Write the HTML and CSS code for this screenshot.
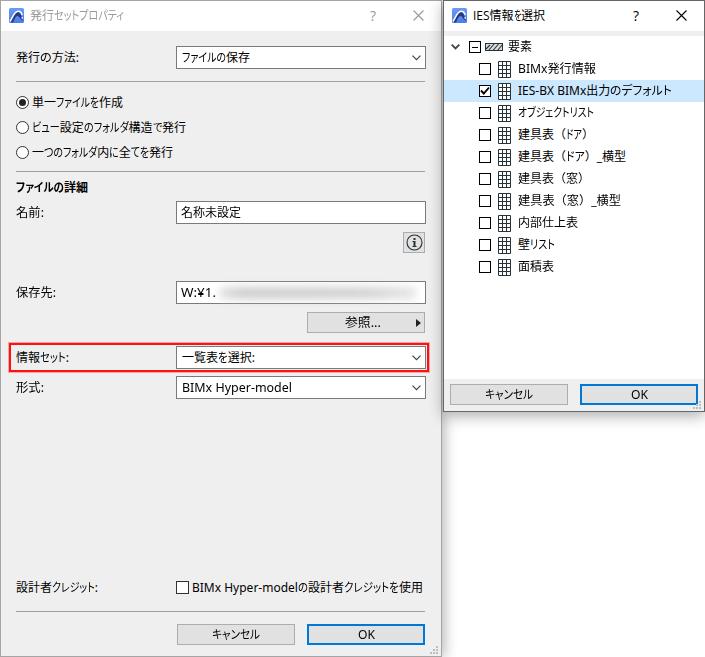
FILE: index.html
```html
<!DOCTYPE html>
<html lang="ja">
<head>
<meta charset="utf-8">
<title>発行セットプロパティ</title>
<link rel="stylesheet" href="styles.css">
</head>
<body>
<svg width="0" height="0" class="defs" aria-hidden="true">
  <defs>
    <linearGradient id="blue" x1="0" y1="0" x2="0" y2="1"><stop offset="0" stop-color="#6b9af8"/><stop offset="1" stop-color="#4c7cec"/></linearGradient>
    <symbol id="logo" viewBox="0 0 15 15"><rect width="15" height="15" rx="1.500" fill="url(#blue)"/><path d="M1 14C4 8.500 6 4 9 4 11.500 4 12.500 8 14 13L11.500 11C10 8.500 9 7.500 7.500 8.500 6 9.500 5 12 4 14.500Z" fill="#263c7c"/><path d="M1 13.500C4 8.500 5.500 3.500 9 3.300 11 3.200 12.500 4.500 13.300 7" fill="none" stroke="#fff" stroke-width="1.500"/><path d="M13.200 9v1.800" stroke="#fff" stroke-width="1.300"/></symbol>
    <symbol id="chev" viewBox="0 0 9 6"><path d="M.5 .7 4.500 4.700 8.500 .7" fill="none" stroke="#444" stroke-width="1.200"/></symbol>
    <symbol id="close" viewBox="0 0 11 11"><path d="M.5.5l10 10M10.500.5l-10 10" fill="none" stroke="currentColor" stroke-width="1.100"/></symbol>
    <symbol id="grid" viewBox="0 0 13 17"><rect width="13" height="17" rx="1" fill="#263238"/><path fill="#fff" d="M1 1h3v3H1zM5 1h3v3H5zM9 1h3v3H9zM1 5h3v3H1zM5 5h3v3H5zM9 5h3v3H9zM1 9h3v3H1zM5 9h3v3H5zM9 9h3v3H9zM1 13h3v3H1zM5 13h3v3H5zM9 13h3v3H9z"/></symbol>
    <symbol id="grip" viewBox="0 0 8 8"><path fill="#bdbdbd" d="M6 0h2v2H6zM3 3h2v2H3zM6 3h2v2H6zM0 6h2v2H0zM3 6h2v2H3zM6 6h2v2H6z"/></symbol>
  </defs>
</svg>

<main class="desk">
  <section class="win main">
    <header class="titlebar">
      <svg class="logo"><use href="#logo"/></svg>
      <span class="t title" data-w="94">発行<b>セットプロパティ</b></span>
      <span class="help">?</span>
      <svg class="close"><use href="#close"/></svg>
    </header>
    <div class="body">
      <div class="row r-method"><label><span class="t" data-w="63">発行<b>の</b>方法:</span></label><div class="field select"><span class="t" data-w="68"><b>ファイルの</b>保存</span><svg class="chev"><use href="#chev"/></svg></div></div>
      <hr>
      <div class="radios">
        <div class="radio"><i class="dot on"></i><span class="t" data-w="91">単一<b>ファイルを</b>作成</span></div>
        <div class="radio"><i class="dot"></i><span class="t" data-w="154"><b>ビュー</b>設定<b>のフォルダ</b>構造<b>で</b>発行</span></div>
        <div class="radio"><i class="dot"></i><span class="t" data-w="141">一<b>つのフォルダ</b>内<b>に</b>全<b>てを</b>発行</span></div>
      </div>
      <hr>
      <h2><span class="t" data-w="72"><b>ファイルの</b>詳細</span></h2>
      <div class="row r-name"><label><span class="t" data-w="28">名前:</span></label><div class="field input"><span class="t" data-w="60">名称未設定</span></div></div>
      <div class="info"><button aria-label="情報"><svg width="17" height="17" viewBox="0 0 17 17"><circle cx="8.500" cy="8.500" r="7.500" fill="none" stroke="#263238" stroke-width="1.100"/><path d="M7.500 4h2v2h-2zM6.500 7h3v5h1v1h-4v-1h1V8h-1z" fill="#263238"/></svg></button></div>
      <div class="row r-dest"><label><span class="t" data-w="40">保存先:</span></label><div class="field input"><span class="t" data-w="35">W:¥1.</span><span class="smudge"></span></div></div>
      <div class="browse"><button><span class="t" data-w="36">参照...</span><svg class="tri" width="5" height="8" viewBox="0 0 5 8"><path d="M0 0 5 4 0 8z" fill="#222"/></svg></button></div>
      <div class="row marked"><label><span class="t" data-w="53">情報<b>セット</b>:</span></label><div class="field select"><span class="t" data-w="73">一覧表<b>を</b>選択:</span><svg class="chev"><use href="#chev"/></svg></div></div>
      <div class="row r-format"><label><span class="t" data-w="28">形式:</span></label><div class="field select"><span class="t" data-w="110">BIMx Hyper-model</span><svg class="chev"><use href="#chev"/></svg></div></div>
      <div class="row r-credit"><label><span class="t" data-w="82">設計者<b>クレジット</b>:</span></label><i class="box"></i><span class="t" data-w="231">BIMx Hyper-model<b>の</b>設計者<b>クレジットを</b>使用</span></div>
      <hr>
      <div class="actions"><button><span class="t" data-w="48"><b>キャンセル</b></span></button><button class="default"><span class="t" data-w="17">OK</span></button></div>
    </div>
    <svg class="grip"><use href="#grip"/></svg>
  </section>

  <section class="win dialog">
    <header class="titlebar">
      <svg class="logo"><use href="#logo"/></svg>
      <span class="t title" data-w="72">IES情報<b>を</b>選択</span>
      <span class="help">?</span>
      <svg class="close"><use href="#close"/></svg>
    </header>
    <div class="tree">
      <div class="root"><svg class="fold" width="9" height="6" viewBox="0 0 9 6"><path d="M.7.7 4.500 4.500 8.300.7" fill="none" stroke="#444" stroke-width="1.900"/></svg><i class="check minus"></i><svg class="hatch" width="18" height="8" viewBox="0 0 18 8"><rect x=".5" y=".5" width="17" height="7" fill="#d8dcdc" stroke="#263238"/><path d="M1 6l4-4M3.500 7.500l6-7M8 7.500l6-7M12.500 7.500l5-6" stroke="#263238" stroke-width="1.100"/></svg><span class="t" data-w="24">要素</span></div>
      <div class="item"><i class="check"></i><svg class="grid"><use href="#grid"/></svg><span class="t" data-w="78">BIMx発行情報</span></div>
      <div class="item sel"><i class="check"><svg width="10" height="10" viewBox="0 0 10 10"><path d="M1 4.500 3.800 7.500 9 1.500" fill="none" stroke="#000" stroke-width="1.900"/></svg></i><svg class="grid"><use href="#grid"/></svg><span class="t" data-w="154">IES-BX BIMx出力<b>のデフォルト</b></span></div>
      <div class="item"><i class="check"></i><svg class="grid"><use href="#grid"/></svg><span class="t" data-w="76"><b>オブジェクトリスト</b></span></div>
      <div class="item"><i class="check"></i><svg class="grid"><use href="#grid"/></svg><span class="t" data-w="76">建具表（<b>ドア</b>）</span></div>
      <div class="item"><i class="check"></i><svg class="grid"><use href="#grid"/></svg><span class="t" data-w="108">建具表（<b>ドア</b>）_横型</span></div>
      <div class="item"><i class="check"></i><svg class="grid"><use href="#grid"/></svg><span class="t" data-w="72">建具表（窓）</span></div>
      <div class="item"><i class="check"></i><svg class="grid"><use href="#grid"/></svg><span class="t" data-w="103">建具表（窓）_横型</span></div>
      <div class="item"><i class="check"></i><svg class="grid"><use href="#grid"/></svg><span class="t" data-w="60">内部仕上表</span></div>
      <div class="item"><i class="check"></i><svg class="grid"><use href="#grid"/></svg><span class="t" data-w="37">壁<b>リスト</b></span></div>
      <div class="item"><i class="check"></i><svg class="grid"><use href="#grid"/></svg><span class="t" data-w="36">面積表</span></div>
    </div>
    <div class="actions"><button><span class="t" data-w="48"><b>キャンセル</b></span></button><button class="default"><span class="t" data-w="17">OK</span></button></div>
    <svg class="grip"><use href="#grip"/></svg>
  </section>
</main>
<script src="fit.js"></script>
</body>
</html>
```
FILE: fit.js
```js
// Condense kana first, then set each label to its designed width.
document.querySelectorAll('.t').forEach(function (label) {
  var target = Number(label.dataset.w);
  var kana = label.querySelectorAll('b');
  var kanaWidth = 0;
  kana.forEach(function (k) { kanaWidth += k.getBoundingClientRect().width; });
  var excess = label.getBoundingClientRect().width - target;
  if (kanaWidth > 0) {
    var ratio = (kanaWidth - excess) / kanaWidth;
    kana.forEach(function (k) {
      var width = k.getBoundingClientRect().width;
      k.style.width = width * ratio + 'px';
      k.style.transform = 'scaleX(' + ratio + ')';
    });
  } else {
    label.style.transform = 'scaleX(' + target / (target + excess) + ')';
    label.style.marginRight = -excess + 'px';
  }
});
```
FILE: styles.css
```css
* { box-sizing: border-box; }
body { margin: 0; background: #fff; color: #000; font: 12px/16px "Noto Sans", "Noto Sans CJK JP", sans-serif; overflow: hidden; }
.defs { position: absolute; }
svg { display: block; flex: none; }
.desk { display: flex; align-items: flex-start; gap: 1px; width: 705px; height: 657px; overflow: hidden; }
.win { position: relative; display: flex; flex-direction: column; flex: none; background: #efefef; }
.main { width: 442px; height: 657px; border: 1px solid #a5a5a5; box-shadow: 3px 0 12px rgba(0,0,0,.28); }
.dialog { width: 262px; height: 412px; border: 1px solid #666; box-shadow: 0 4px 14px rgba(0,0,0,.32); }
.titlebar { display: flex; align-items: center; height: 30px; padding-left: 8px; background: #fff; font-family: "Open Sans", "Noto Sans CJK JP", sans-serif; }
.main .titlebar { color: #999; }
.logo { width: 15px; height: 15px; margin: 0 6px 1px 0; }
.help { margin-left: auto; width: 10px; text-align: center; font-size: 14px; }
.close { width: 11px; height: 11px; margin: 0 17px 1px 35px; }
.t { display: inline-block; flex: none; white-space: nowrap; transform-origin: 0 50%; }
.t b { display: inline-block; font-weight: inherit; font-feature-settings: "palt"; transform-origin: 0 50%; }
.body { display: flex; flex-direction: column; padding: 15px 15px 0; }
hr { width: 409px; height: 1px; margin: 0; border: 0; background: #a0a0a0; flex: none; }
.row { display: flex; align-items: center; height: 23px; flex: none; }
.row label { width: 160px; flex: none; }
.field { display: flex; align-items: center; width: 250px; height: 23px; border: 1px solid #7a7a7a; background: #fff; }
.select { padding: 0 4px 0 5px; }
.input { padding-left: 4px; }
.chev { width: 9px; height: 6px; margin-left: auto; }
.r-method { margin-bottom: 12px; }
.radios { display: flex; flex-direction: column; height: 89px; padding-top: 8px; }
.radio { display: flex; align-items: center; height: 25px; gap: 3px; }
.dot { display: flex; width: 13px; height: 13px; border: 1px solid #333; border-radius: 50%; background: #fff; }
.dot.on::after { content: ""; width: 7px; height: 7px; margin: 2px; border-radius: 50%; background: #222; }
h2 { margin: 8px 0 5px; height: 16px; font-size: 12px; line-height: 16px; font-weight: 700; }
.info { display: flex; justify-content: flex-end; margin: 8px 1px 28px 0; }
button { display: flex; align-items: center; justify-content: center; height: 21px; padding: 0; border: 1px solid #adadad; background: #e1e1e1; color: #000; font: inherit; }
.info button { width: 22px; }
.smudge { width: 196px; height: 12px; margin-left: 4px; background: linear-gradient(90deg, #e0e0e0, #cdcdcd 12%, #d2d2d2 75%, #e6e6e6); filter: blur(4px); }
.browse { display: flex; justify-content: flex-end; margin: 8px 1px 10px 0; }
.browse button { width: 118px; padding: 0 3px 0 37px; }
.tri { margin-left: auto; }
.marked { width: 420px; height: 29px; margin: 0 0 4px -7px; padding: 0 0 0 7px; outline: 2px solid #f11; outline-offset: -2px; box-shadow: 0 0 0 1px rgba(255,60,60,.4); }
.r-credit { margin: 177px 0 12px; }
.box { width: 13px; height: 13px; margin-right: 3px; border: 1px solid #333; background: #fff; }
.actions { display: flex; gap: 12px; flex: none; }
.actions button { width: 118px; }
.actions .default { border: 2px solid #0078d7; }
.body .actions { margin: 12px 1px 0 161px; }
.grip { position: absolute; right: 3px; bottom: 2px; width: 8px; height: 8px; }
.tree { height: 343px; margin-top: 5px; background: #fff; }
.root, .item { display: flex; align-items: center; height: 22px; }
.root { padding-left: 7px; }
.fold { margin-right: 9px; }
.hatch { margin: 0 5px 0 4px; }
.item { padding-left: 35px; }
.sel { background: #cce8ff; }
.check { display: flex; align-items: center; justify-content: center; width: 12px; height: 12px; border: 1px solid #000; background: #fff; flex: none; }
.minus::after { content: ""; width: 6px; height: 1px; background: #000; }
.grid { width: 13px; height: 17px; margin: 1px 7px 0 7px; }
.dialog .actions { padding: 5px 6px; }
```
